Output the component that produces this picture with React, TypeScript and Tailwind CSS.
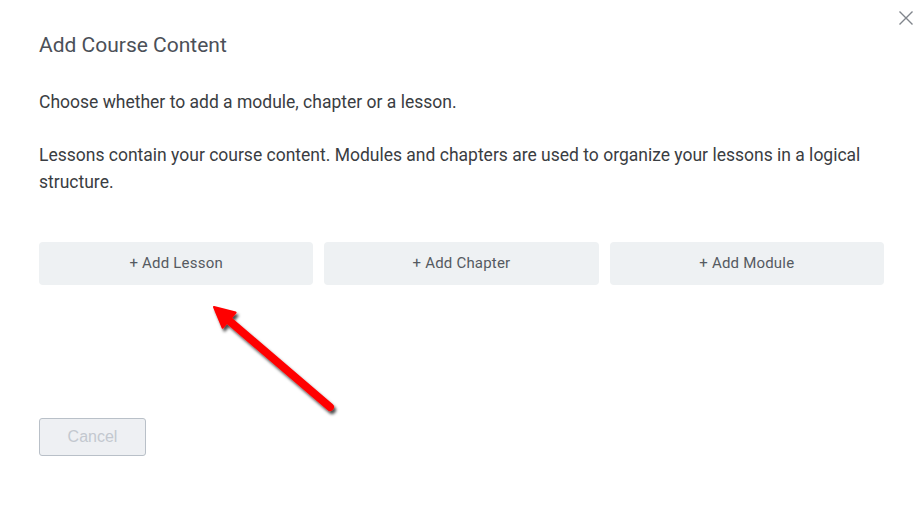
export default function App() {
  const actions = ['+ Add Lesson', '+ Add Chapter', '+ Add Module']

  return (
    <div className="relative w-[920px] h-[510px] bg-white overflow-hidden font-['Roboto',sans-serif]">
      {/* close */}
      <button type="button" className="absolute top-[10px] right-[6px] w-[16px] h-[16px]">
        <svg viewBox="0 0 16 16" className="w-[16px] h-[16px]" fill="none" stroke="#80858c" strokeWidth="1.4">
          <path d="M1.5 1.5 L14.5 14.5 M14.5 1.5 L1.5 14.5" />
        </svg>
      </button>

      <div className="flex flex-col pl-[39px] pr-[36px]">
        <h2 className="mt-[31px] text-[21px] leading-[28px] text-[#4b5058]">Add Course Content</h2>
        <p className="mt-[31px] text-[17.5px] leading-[24px] text-[#3a3d42]">
          Choose whether to add a module, chapter or a lesson.
        </p>
        <p className="mt-[28px] text-[17.5px] leading-[27px] text-[#3a3d42]">
          Lessons contain your course content. Modules and chapters are used to organize your lessons in a logical
          structure.
        </p>

        <div className="mt-[46px] grid grid-cols-3 gap-[11px]">
          {actions.map((a) => (
            <button
              key={a}
              type="button"
              className="h-[43px] rounded-[4px] bg-[#eef1f3] text-[15px] tracking-[0.2px] text-[#555a61]"
            >
              {a}
            </button>
          ))}
        </div>

        <div className="mt-[133px]">
          <button
            type="button"
            disabled
            className="w-[107px] h-[38px] rounded-[3px] border border-[#b9c0c8] bg-[#eef0f3] font-['Liberation_Sans',Arial,sans-serif] text-[16px] text-[#c3c8cf]"
          >
            Cancel
          </button>
        </div>
      </div>

      {/* annotation arrow */}
      <svg className="absolute inset-0 pointer-events-none" width="920" height="510" viewBox="0 0 920 510">
        <defs>
          <filter id="sh" x="-20%" y="-20%" width="140%" height="140%">
            <feDropShadow dx="2" dy="3" stdDeviation="1.8" floodColor="#000" floodOpacity="0.7" />
          </filter>
        </defs>
        <g filter="url(#sh)">
          <line x1="330" y1="407" x2="226" y2="318" stroke="#ff0000" strokeWidth="8" strokeLinecap="round" />
          <polygon points="214,307 235.6,312.5 222.6,327.7" fill="#ff0000" stroke="#ff0000" strokeWidth="2" strokeLinejoin="round" />
        </g>
      </svg>
    </div>
  )
}
